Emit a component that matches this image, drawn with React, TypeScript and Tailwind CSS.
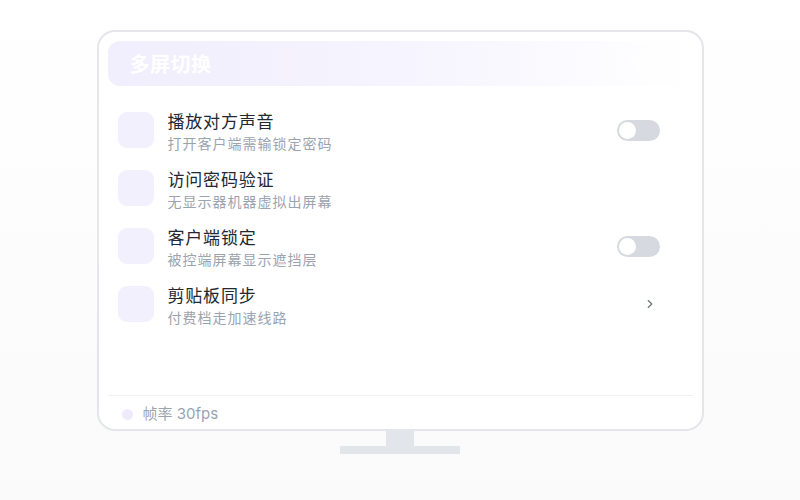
import { ChevronRight } from 'lucide-react'

type Row = {
  title: string
  desc: string
  action: 'toggle' | 'none' | 'chevron'
}

const rows: Row[] = [
  { title: '播放对方声音', desc: '打开客户端需输锁定密码', action: 'toggle' },
  { title: '访问密码验证', desc: '无显示器机器虚拟出屏幕', action: 'none' },
  { title: '客户端锁定', desc: '被控端屏幕显示遮挡层', action: 'toggle' },
  { title: '剪贴板同步', desc: '付费档走加速线路', action: 'chevron' },
]

function Toggle() {
  return (
    <div className="w-[43px] h-[21px] rounded-full bg-[#d6d9df] p-[2px] flex items-center">
      <div className="w-[17px] h-[17px] rounded-full bg-white" />
    </div>
  )
}

export default function App() {
  return (
    <div
      className="w-[800px] h-[500px] bg-gradient-to-b from-white to-[#fafafa] flex flex-col items-center pt-[30px]"
      style={{ fontFamily: 'Inter, "Noto Sans CJK SC", sans-serif' }}
    >
      {/* Monitor */}
      <div className="w-[607px] h-[401px] bg-white border-2 border-[#e4e6eb] rounded-[18px] flex flex-col pt-[9px] px-[9px]">
        {/* Header */}
        <div className="h-[45px] rounded-[12px] bg-gradient-to-r from-[#f1eefd] via-[#f6f4fe] to-white flex items-center justify-between pl-[22px] pr-[20px] pt-[3px]">
          <span className="text-[20px] tracking-[0.5px] font-bold text-white">多屏切换</span>
          <div className="flex gap-[5px] opacity-70">
            <div className="w-[9px] h-[9px] rounded-full bg-white" />
            <div className="w-[9px] h-[9px] rounded-full bg-white" />
            <div className="w-[9px] h-[9px] rounded-full bg-white" />
          </div>
        </div>

        {/* Settings rows */}
        <div className="flex flex-col mt-[26px] px-[10px]">
          {rows.map((row) => (
            <div key={row.title} className="h-[58px] flex items-start">
              <div className="w-[36px] h-[36px] rounded-[9px] bg-[#f3f0fe] shrink-0" />
              <div className="ml-[14px] flex flex-col flex-1">
                <span className="text-[17px] tracking-[0.8px] leading-[21px] text-[#222831]">{row.title}</span>
                <span className="text-[14px] tracking-[1px] leading-[17px] mt-[2px] text-[#9ca3af]">{row.desc}</span>
              </div>
              <div className="w-[43px] h-[36px] mr-[23px] flex items-center justify-end">
                {row.action === 'toggle' && <Toggle />}
                {row.action === 'chevron' && (
                  <ChevronRight className="w-[14px] h-[14px] text-[#6b7280] mr-[3px]" strokeWidth={2} />
                )}
              </div>
            </div>
          ))}
        </div>

        {/* Footer */}
        <div className="mt-auto border-t border-[#f0f1f4] h-[34px] flex items-center pl-[14px] pt-[3px]">
          <div className="w-[11px] h-[11px] rounded-full bg-[#efebfd]" />
          <span className="ml-[10px] text-[15px] text-[#9ca3af]">帧率 30fps</span>
        </div>
      </div>

      {/* Stand */}
      <div className="w-[28px] h-[15px] bg-[#e2e5ea]" />
      <div className="w-[120px] h-[8px] bg-[#e2e5ea]" />
    </div>
  )
}
